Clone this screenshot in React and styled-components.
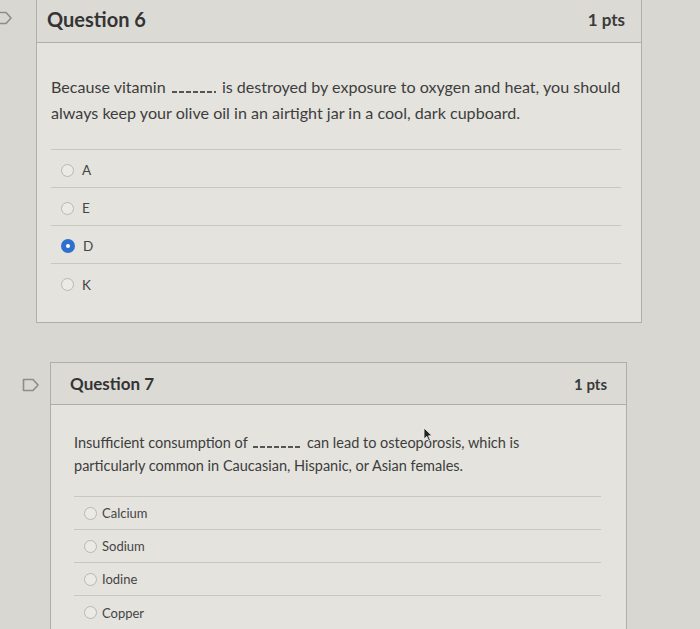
import React from "react";
import styled, { createGlobalStyle } from "styled-components";

const Global = createGlobalStyle`
  html, body { margin: 0; padding: 0; }
  body {
    background: #d8d7d2;
    font-family: Lato, "Open Sans", "Liberation Sans", sans-serif;
    color: #3b3b3b;
    overflow: hidden;
  }
`;

const Page = styled.div`
  width: 700px;
  height: 629px;
  overflow: hidden;
  display: flex;
  flex-direction: column;
  gap: 39px;
`;

const Card = styled.section`
  position: relative;
  margin-left: ${(p) => p.$left}px;
  margin-top: ${(p) => p.$top || 0}px;
  width: ${(p) => p.$width}px;
  background: #e4e3de;
  border: 1px solid #afaea9;
  flex-shrink: 0;
`;

const Flag = styled.svg`
  position: absolute;
  left: ${(p) => p.$x}px;
  top: ${(p) => p.$y}px;
`;

const Header = styled.header`
  height: ${(p) => p.$h}px;
  display: flex;
  align-items: center;
  justify-content: space-between;
  padding: 0 ${(p) => p.$padR}px 0 ${(p) => p.$padL}px;
  background: #dbdad5;
  border-bottom: 1px solid #afaea9;
`;

const Title = styled.h2`
  margin: 0;
  font-size: ${(p) => p.$size}px;
  font-weight: 700;
  color: #343434;
`;

const Points = styled.span`
  font-size: ${(p) => p.$size}px;
  font-weight: 700;
  color: #3a3a3a;
`;

const Body = styled.div`
  position: relative;
  padding: ${(p) => p.$padT}px ${(p) => p.$padR}px ${(p) => p.$padB}px ${(p) => p.$padL}px;
`;

const Prompt = styled.p`
  margin: 0 0 ${(p) => p.$gap}px;
  font-size: ${(p) => p.$size}px;
  line-height: ${(p) => p.$lh}px;
  color: #3d3d3d;
  white-space: nowrap;
`;

const Answers = styled.ul`
  list-style: none;
  margin: 0;
  padding: 0;
  border-top: 1px solid #c8c7c2;
`;

const Answer = styled.li`
  box-sizing: border-box;
  height: ${(p) => p.$h}px;
  display: flex;
  align-items: center;
  gap: ${(p) => p.$gap}px;
  padding-left: ${(p) => p.$indent}px;
  padding-top: ${(p) => p.$shift || 0}px;
  font-size: ${(p) => p.$size}px;
  color: #454545;
  border-bottom: 1px solid #c8c7c2;
  &:last-child { border-bottom: none; }
`;

const Radio = styled.span`
  box-sizing: border-box;
  width: ${(p) => (p.$checked ? 14 : 13)}px;
  height: ${(p) => (p.$checked ? 14 : 13)}px;
  border-radius: 50%;
  flex-shrink: 0;
  border: ${(p) => (p.$checked ? "none" : "1.5px solid #b9b8b3")};
  background: ${(p) => (p.$checked ? "#2f6fd0" : "#ebeae6")};
  display: flex;
  align-items: center;
  justify-content: center;
  &::after {
    content: "";
    display: ${(p) => (p.$checked ? "block" : "none")};
    width: 4px;
    height: 4px;
    border-radius: 50%;
    background: #fff;
  }
`;

const Blank = styled.span`
  display: inline-block;
  width: ${(p) => p.$w}px;
  height: 2px;
  margin: 0 2px;
  vertical-align: baseline;
  background: repeating-linear-gradient(90deg, #555 0 5px, transparent 5px 7px);
`;

const Cursor = styled.svg`
  position: absolute;
  left: ${(p) => p.$x}px;
  top: ${(p) => p.$y}px;
`;

const FlagIcon = ({ x, y, w = 18, h = 14 }) => (
  <Flag $x={x} $y={y} width={w} height={h} viewBox="0 0 18 14">
    <path d="M1.5 1.5 H11 L16 7 L11 12.5 H1.5 Z" fill="none" stroke="#8e8d88" strokeWidth="1.6" strokeLinejoin="round" />
  </Flag>
);

export default function App() {
  const q6 = ["A", "E", "D", "K"];
  const q7 = ["Calcium", "Sodium", "Iodine", "Copper"];
  return (
    <>
      <Global />
      <Page>
        <Card $left={36} $top={-5} $width={604}>
          <FlagIcon x={-42} y={15} />
          <Header $h={46} $padL={10} $padR={16}>
            <Title $size={20}>Question 6</Title>
            <Points $size={17}>1 pts</Points>
          </Header>
          <Body $padT={31} $padL={14} $padR={20} $padB={20}>
            <Prompt $size={16.1} $lh={26} $gap={23}>
              Because vitamin <Blank $w={44} aria-label="blank" /> is destroyed by exposure to oxygen and heat, you should
              <br />
              always keep your olive oil in an airtight jar in a cool, dark cupboard.
            </Prompt>
            <Answers>
              {q6.map((a) => (
                <Answer key={a} $h={38} $shift={3} $indent={10} $gap={8} $size={13.5}>
                  <Radio $checked={a === "D"} />
                  {a}
                </Answer>
              ))}
            </Answers>
          </Body>
        </Card>

        <Card $left={50} $width={575}>
          <FlagIcon x={-29} y={15} />
          <Header $h={41} $padL={19} $padR={19}>
            <Title $size={17}>Question 7</Title>
            <Points $size={15}>1 pts</Points>
          </Header>
          <Body $padT={26} $padL={23} $padR={25} $padB={0}>
            <Prompt $size={14.5} $lh={23} $gap={19}>
              Insufficient consumption of <Blank $w={48} aria-label="blank" /> can lead to osteoporosis, which is
              <br />
              particularly common in Caucasian, Hispanic, or Asian females.
            </Prompt>
            <Answers>
              {q7.map((a) => (
                <Answer key={a} $h={33} $indent={10} $gap={5} $size={13}>
                  <Radio />
                  {a}
                </Answer>
              ))}
            </Answers>
            <Cursor $x={372} $y={22} width="10" height="15" viewBox="0 0 10 15">
              <path d="M1 1 L1 12 L3.8 9.4 L5.8 14 L7.4 13.3 L5.5 8.8 L9 8.8 Z" fill="#222" stroke="#eee" strokeWidth="0.8" />
            </Cursor>
          </Body>
        </Card>
      </Page>
    </>
  );
}
